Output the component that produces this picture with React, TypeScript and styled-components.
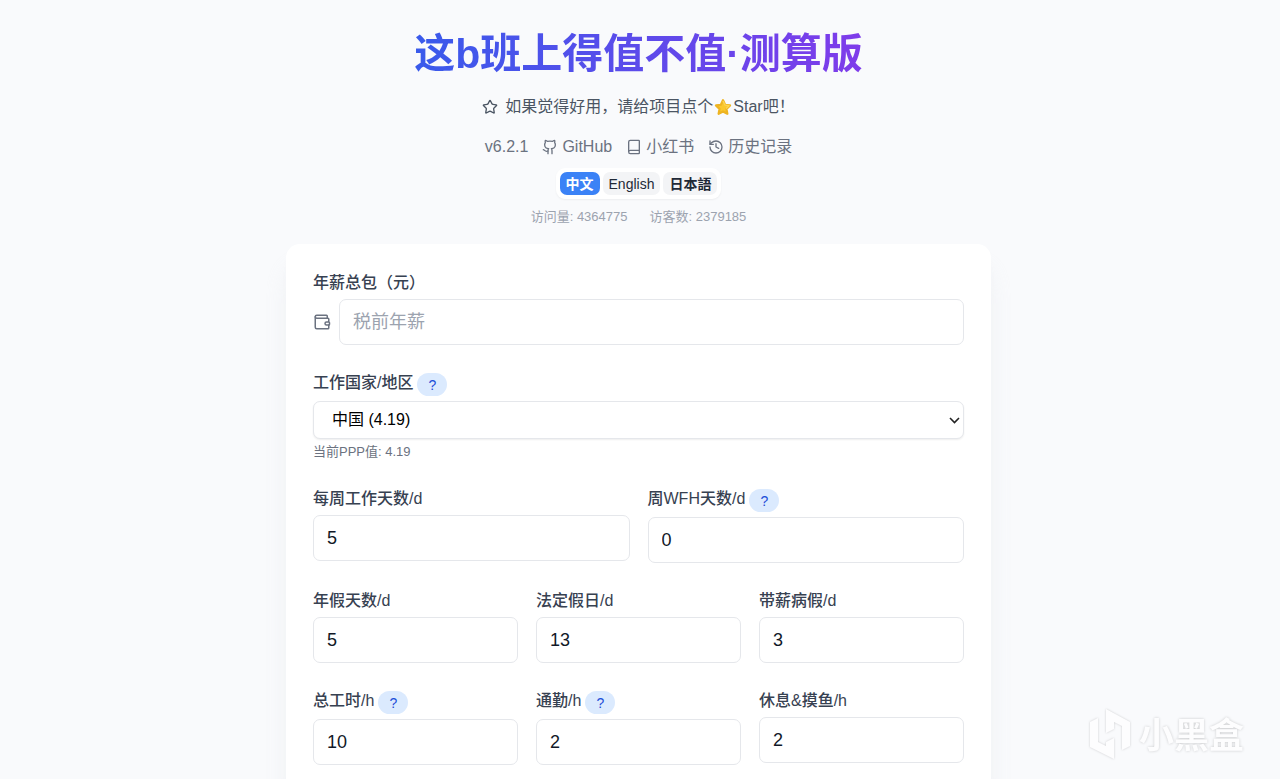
import React, { useId, useState } from "react";
import styled, { createGlobalStyle, css } from "styled-components";
import { Book, Github, History, Star } from "lucide-react";

const GlobalStyle = createGlobalStyle`
  *, *::before, *::after { box-sizing: border-box; }
  body {
    margin: 0;
    background: #f9fafc;
    color: #111827;
    font-family: "Liberation Sans", Arial, "Noto Sans CJK SC", sans-serif;
    font-size: 16px;
    line-height: 24px;
  }
  button, input, select { font: inherit; color: inherit; }
`;

const Page = styled.div`
  display: flex;
  flex-direction: column;
  align-items: center;
  padding: 28px 21px 27px 18px;
`;

const Header = styled.header`
  display: flex;
  flex-direction: column;
  align-items: center;
  width: 100%;
  max-width: 705px;
  text-align: center;
`;

const Title = styled.h1`
  align-self: stretch;
  margin: 0 0 15px;
  font-size: 41px;
  line-height: 52px;
  font-weight: 700;
  color: transparent;
  background: linear-gradient(to right, #2563eb, #9333ea);
  background-clip: text;
  -webkit-background-clip: text;
`;

const StarLine = styled.a`
  display: flex;
  align-items: center;
  margin-bottom: 16px;
  color: #4b5563;
  text-decoration: none;

  > svg { margin-right: 7px; }
`;

const InlineStar = styled.svg`
  width: 18px;
  height: 18px;
  margin: 0 1px;
  vertical-align: -4px;
`;

const Links = styled.nav`
  display: flex;
  align-items: center;
  gap: 14px;
  margin-bottom: 9px;
  color: #6b7280;
`;

const NavLink = styled.a`
  display: flex;
  align-items: center;
  gap: 4px;
  color: inherit;
  text-decoration: none;
`;

const Languages = styled.div`
  display: flex;
  gap: 3px;
  padding: 4px;
  margin-bottom: 9px;
  border-radius: 9px;
  background: #fff;
  box-shadow: 0 1px 2px rgba(0, 0, 0, 0.05);
`;

const LanguageButton = styled.button<{ $active?: boolean; $bold?: boolean }>`
  height: 23px;
  padding: 0 6px;
  border: 0;
  border-radius: 7px;
  font-size: 14px;
  line-height: 22px;
  cursor: pointer;
  font-weight: ${(p) => (p.$bold ? 700 : 400)};
  background: #f3f4f6;
  color: #1f2937;
  ${(p) =>
    p.$active &&
    css`
      background: #3b82f6;
      color: #fff;
    `}
`;

const Stats = styled.div`
  display: flex;
  gap: 22px;
  margin-bottom: 18px;
  font-size: 13px;
  line-height: 18px;
  color: #9ca3af;
`;

const Card = styled.main`
  display: grid;
  gap: 27px;
  width: 100%;
  max-width: 705px;
  padding: 28px 27px;
  border-radius: 14px;
  background: #fff;
  box-shadow: 0 22px 28px -6px rgba(229, 231, 235, 0.6), 0 9px 11px -7px rgba(229, 231, 235, 0.6);
`;

const FieldRow = styled.div<{ $columns: number }>`
  display: grid;
  grid-template-columns: repeat(${(p) => p.$columns}, minmax(0, 1fr));
  align-items: start;
  gap: 18px;
`;

const LabelRow = styled.div`
  display: flex;
  align-items: flex-start;
  gap: 4px;
  margin-bottom: 5px;
`;

const Label = styled.label`
  font-weight: 500;
  line-height: 22px;
  color: #374151;
`;

const HelpButton = styled.button`
  width: 30px;
  height: 23px;
  margin-top: 1px;
  padding: 0;
  border: 0;
  border-radius: 12px;
  background: #dbeafe;
  color: #1d4ed8;
  font-size: 14px;
  line-height: 22px;
  cursor: pointer;
`;

const InputLine = styled.div`
  display: flex;
  align-items: center;
  gap: 8px;
  color: #6b7280;
`;

const TextInput = styled.input`
  display: block;
  width: 100%;
  min-width: 0;
  height: 46px;
  padding: 0 13px;
  border: 1px solid #e5e7eb;
  border-radius: 7px;
  background: #fff;
  color: #111827;
  font-size: 18px;

  &::placeholder { color: #9ca3af; opacity: 1; }
`;

const SelectBox = styled.div`
  position: relative;
`;

const Select = styled.select`
  display: block;
  appearance: none;
  width: 100%;
  height: 38px;
  padding: 0 18px;
  border: 1px solid #e5e7eb;
  border-radius: 7px;
  background: #fff;
  color: #000;
  box-shadow: 0 1px 2px rgba(0, 0, 0, 0.07);
`;

const Chevron = styled.svg`
  position: absolute;
  top: 16px;
  right: 4px;
  width: 11px;
  height: 7px;
  pointer-events: none;
`;

const Hint = styled.p`
  margin: 4px 0 0;
  font-size: 13px;
  line-height: 18px;
  color: #6b7280;
`;

const WalletSvg = styled.svg`
  flex: none;
  width: 18px;
  height: 18px;
`;

const Watermark = styled.div`
  position: fixed;
  right: 36px;
  bottom: 19px;
  display: flex;
  align-items: flex-end;
  gap: 8px;
  color: #fdfdfe;
  font-size: 35px;
  line-height: 48px;
  font-weight: 700;
  text-shadow: 0 0 3px rgba(0, 0, 0, 0.2);
  pointer-events: none;

  svg { overflow: visible; filter: drop-shadow(0 0 1px rgba(0, 0, 0, 0.18)); }
`;

function WalletIcon() {
  return (
    <WalletSvg viewBox="0 0 24 24" fill="none" stroke="currentColor" strokeWidth="2" strokeLinecap="round" strokeLinejoin="round" aria-hidden="true">
      <path d="M19 7V4a1 1 0 0 0-1-1H5a2 2 0 0 0 0 4h15a1 1 0 0 1 1 1v4h-3a2 2 0 0 0 0 4h3a1 1 0 0 0 1-1v-2a1 1 0 0 0-1-1" />
      <path d="M3 5v14a2 2 0 0 0 2 2h15a1 1 0 0 0 1-1v-4" />
    </WalletSvg>
  );
}

type FieldProps = { label: string; value: string; help?: boolean; icon?: React.ReactNode; placeholder?: string };

function Field({ label, value, help, icon, placeholder }: FieldProps) {
  const id = useId();
  const [current, setCurrent] = useState(value);
  const input = (
    <TextInput id={id} inputMode="decimal" value={current} placeholder={placeholder} onChange={(e) => setCurrent(e.target.value)} />
  );
  return (
    <div>
      <LabelRow>
        <Label htmlFor={id}>{label}</Label>
        {help && <HelpButton type="button" aria-label={`${label}说明`}>?</HelpButton>}
      </LabelRow>
      {icon ? <InputLine>{icon}{input}</InputLine> : input}
    </div>
  );
}

const languages = [
  { name: "中文", bold: true },
  { name: "English", bold: false },
  { name: "日本語", bold: true },
];

export default function App() {
  const [language, setLanguage] = useState("中文");
  return (
    <>
      <GlobalStyle />
      <Page>
        <Header>
          <Title>这b班上得值不值·测算版</Title>
          <StarLine href="#star">
            <Star size={16} />
            <span>
              如果觉得好用，请给项目点个
              <InlineStar viewBox="0 0 24 24" aria-hidden="true">
                <path d="M12 3l2.800 6 6.600.900-4.800 4.600 1.200 6.500L12 17.900 6.200 21l1.200-6.500-4.800-4.600L9.200 9z" fill="#fbc82c" stroke="#eeb422" strokeWidth="3" strokeLinejoin="round" />
                <path d="M12 4l2.500 5.500 5.500.800-4 3.700" fill="none" stroke="#fdd54f" strokeWidth="2" strokeLinejoin="round" />
              </InlineStar>
              Star吧！
            </span>
          </StarLine>
          <Links>
            <span>v6.2.1</span>
            <NavLink href="#github"><Github size={16} />GitHub</NavLink>
            <NavLink href="#xiaohongshu"><Book size={16} />小红书</NavLink>
            <NavLink href="#history"><History size={16} />历史记录</NavLink>
          </Links>
          <Languages>
            {languages.map(({ name, bold }) => (
              <LanguageButton key={name} type="button" $bold={bold} $active={name === language} onClick={() => setLanguage(name)}>
                {name}
              </LanguageButton>
            ))}
          </Languages>
          <Stats>
            <span>访问量: 4364775</span>
            <span>访客数: 2379185</span>
          </Stats>
        </Header>

        <Card>
          <Field label="年薪总包（元）" value="" placeholder="税前年薪" icon={<WalletIcon />} />
          <div>
            <LabelRow>
              <Label htmlFor="country">工作国家/地区</Label>
              <HelpButton type="button" aria-label="工作国家/地区说明">?</HelpButton>
            </LabelRow>
            <SelectBox>
              <Select id="country" defaultValue="cn">
                <option value="cn">中国 (4.19)</option>
              </Select>
              <Chevron viewBox="0 0 11 7" fill="none" stroke="#222" strokeWidth="1.6" aria-hidden="true">
                <path d="M1 1l4.500 4.500L10 1" />
              </Chevron>
            </SelectBox>
            <Hint>当前PPP值: 4.19</Hint>
          </div>
          <FieldRow $columns={2}>
            <Field label="每周工作天数/d" value="5" />
            <Field label="周WFH天数/d" value="0" help />
          </FieldRow>
          <FieldRow $columns={3}>
            <Field label="年假天数/d" value="5" />
            <Field label="法定假日/d" value="13" />
            <Field label="带薪病假/d" value="3" />
          </FieldRow>
          <FieldRow $columns={3}>
            <Field label="总工时/h" value="10" help />
            <Field label="通勤/h" value="2" help />
            <Field label="休息&摸鱼/h" value="2" />
          </FieldRow>
        </Card>
      </Page>
      <Watermark>
        <svg width="42" height="51" viewBox="0 0 42 51" fill="currentColor" aria-hidden="true">
          <path d="M9 9L1 13v25l24 12V29l-8 4v4l-8-4z" />
          <path d="M17 0l24 13v24l-8 4V17l-8-4v7l-8 4z" />
        </svg>
        <span>小黑盒</span>
      </Watermark>
    </>
  );
}
